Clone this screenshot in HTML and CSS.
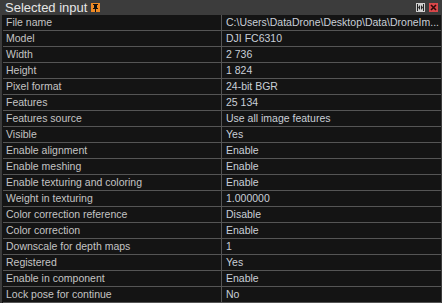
FILE: index.html
```html
<!DOCTYPE html>
<html lang="en">
<head>
    <meta charset="UTF-8">
    <title>Selected input</title>
    <link rel="stylesheet" href="styles.css">
</head>
<body>
    <div class="panel">
        <div class="titlebar">
            <span class="title">Selected input</span>
            <span class="pin">
                <svg width="9" height="9" viewBox="0 0 9 9"><path d="M2 1h5v1h-1v3h1v1h-2v3h-1v-3h-2v-1h1v-3h-1z" fill="#111"/></svg>
            </span>
            <span class="spacer"></span>
            <span class="btn btn-max">
                <svg width="9" height="9" viewBox="0 0 9 9"><path d="M1 1v7h1v-7zM7 1v7h1v-7zM2 4.5l2-2.5v5zM7 4.5l-2-2.5v5z" fill="#222"/></svg>
            </span>
            <span class="btn btn-close">
                <svg width="9" height="9" viewBox="0 0 9 9"><path d="M2 2l5 5M7 2l-5 5" stroke="#2a0a0a" stroke-width="1.6"/></svg>
            </span>
        </div>
        <div class="rows">
            <div class="row"><div class="key">File name</div><div class="val">C:\Users\DataDrone\Desktop\Data\DroneIm...</div></div>
            <div class="row"><div class="key">Model</div><div class="val">DJI FC6310</div></div>
            <div class="row"><div class="key">Width</div><div class="val">2 736</div></div>
            <div class="row"><div class="key">Height</div><div class="val">1 824</div></div>
            <div class="row"><div class="key">Pixel format</div><div class="val">24-bit BGR</div></div>
            <div class="row"><div class="key">Features</div><div class="val">25 134</div></div>
            <div class="row"><div class="key">Features source</div><div class="val">Use all image features</div></div>
            <div class="row"><div class="key">Visible</div><div class="val">Yes</div></div>
            <div class="row"><div class="key">Enable alignment</div><div class="val">Enable</div></div>
            <div class="row"><div class="key">Enable meshing</div><div class="val">Enable</div></div>
            <div class="row"><div class="key">Enable texturing and coloring</div><div class="val">Enable</div></div>
            <div class="row"><div class="key">Weight in texturing</div><div class="val">1.000000</div></div>
            <div class="row"><div class="key">Color correction reference</div><div class="val">Disable</div></div>
            <div class="row"><div class="key">Color correction</div><div class="val">Enable</div></div>
            <div class="row"><div class="key">Downscale for depth maps</div><div class="val">1</div></div>
            <div class="row"><div class="key">Registered</div><div class="val">Yes</div></div>
            <div class="row"><div class="key">Enable in component</div><div class="val">Enable</div></div>
            <div class="row"><div class="key">Lock pose for continue</div><div class="val">No</div></div>
        </div>
    </div>
</body>
</html>
```

FILE: styles.css
```css
body{
    margin: 0;
    padding: 0;
    background-color: #141414;
    font-family: "Liberation Sans", Arial, sans-serif;
}
.panel{
    width: 442px;
    height: 303px;
    overflow: hidden;
}
.titlebar{
    height: 15px;
    background-color: #3c3c3c;
    display: flex;
    align-items: center;
    padding-left: 5px;
    padding-right: 4px;
}
.title{
    color: #e6e6e6;
    font-size: 13px;
    line-height: 15px;
}
.pin{
    display: flex;
    margin-left: 4px;
    background-color: #f08a24;
}
.spacer{
    flex: 1;
}
.btn{
    display: flex;
    margin-left: 4px;
}
.btn-max{
    background-color: #cfcfcf;
}
.btn-close{
    background-color: #d9474a;
}
.rows{
    border-left: 2px solid #3c3c3c;
    border-right: 1px solid #3c3c3c;
}
.row{
    display: flex;
    height: 15px;
    border-bottom: 1px solid #555;
    margin-left: 1px;
}
.key,.val{
    color: #c4c4c4;
    font-size: 10.5px;
    line-height: 15px;
    white-space: nowrap;
    overflow: hidden;
}
.key{
    width: 215px;
    padding-left: 3px;
    border-right: 1px solid #555;
}
.val{
    flex: 1;
    padding-left: 4px;
    color: #cad0d8;
}
```
